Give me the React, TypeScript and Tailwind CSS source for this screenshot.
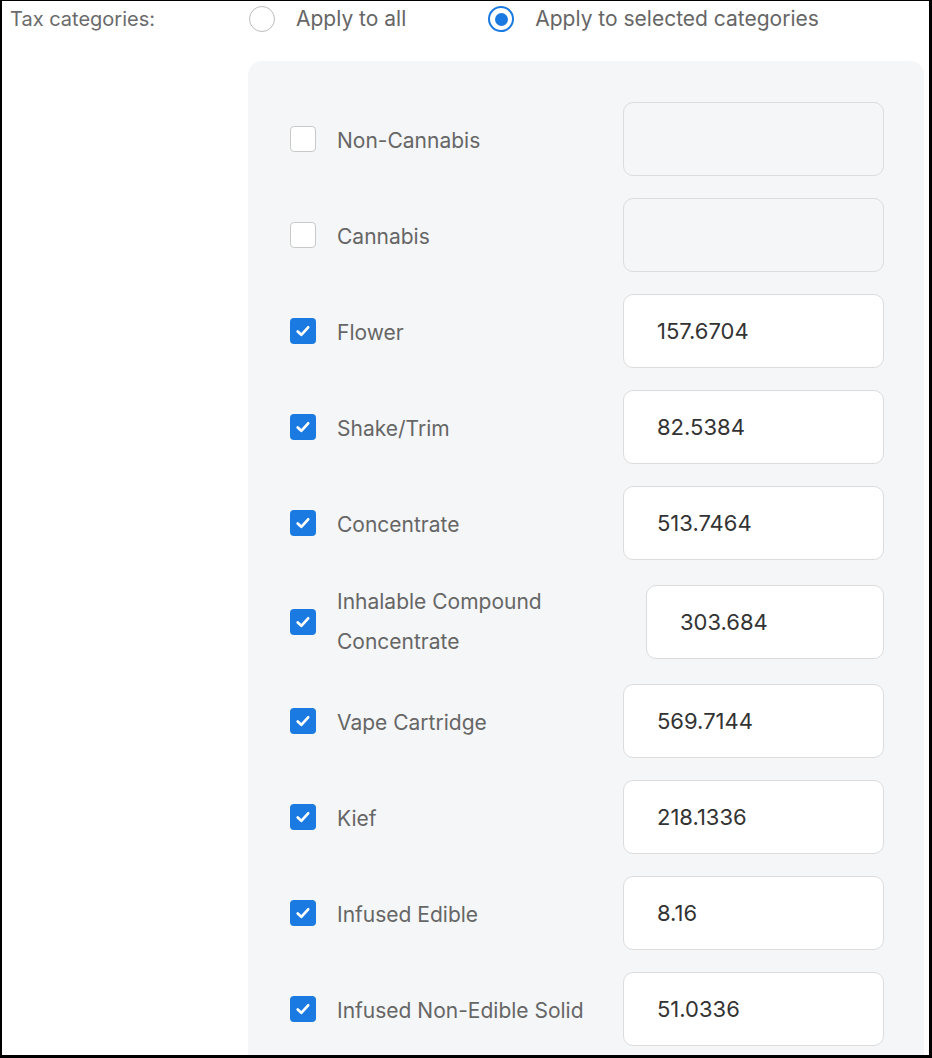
import React from "react";

type Row = { label: string[]; value: string; checked: boolean; width?: number };

const rows: Row[] = [
  { label: ["Non-Cannabis"], value: "", checked: false },
  { label: ["Cannabis"], value: "", checked: false },
  { label: ["Flower"], value: "157.6704", checked: true },
  { label: ["Shake/Trim"], value: "82.5384", checked: true },
  { label: ["Concentrate"], value: "513.7464", checked: true },
  { label: ["Inhalable Compound", "Concentrate"], value: "303.684", checked: true, width: 238 },
  { label: ["Vape Cartridge"], value: "569.7144", checked: true },
  { label: ["Kief"], value: "218.1336", checked: true },
  { label: ["Infused Edible"], value: "8.16", checked: true },
  { label: ["Infused Non-Edible Solid"], value: "51.0336", checked: true },
];

function Checkbox({ checked }: { checked: boolean }) {
  if (checked) {
    return (
      <div className="w-[26px] h-[26px] rounded-[4px] bg-[#1a7ae2] flex items-center justify-center shrink-0">
        <svg width="18" height="18" viewBox="0 0 16 16" fill="none">
          <path d="M3.3 8.4 L6.5 11.4 L12.6 4.7" stroke="white" strokeWidth="2.4" strokeLinecap="round" strokeLinejoin="round" />
        </svg>
      </div>
    );
  }
  return <div className="w-[26px] h-[26px] rounded-[4px] bg-white border-[1.5px] border-[#c9c9c9] shrink-0" />;
}

function Radio({ checked }: { checked: boolean }) {
  if (checked) {
    return (
      <div className="w-[26px] h-[26px] rounded-full border-2 border-[#1a7ae2] flex items-center justify-center shrink-0">
        <div className="w-[13px] h-[13px] rounded-full bg-[#1a7ae2]" />
      </div>
    );
  }
  return <div className="w-[26px] h-[26px] rounded-full border-[1.5px] border-[#bdbdbd] bg-white shrink-0" />;
}

export default function App() {
  return (
    <div className="w-[932px] h-[1058px] overflow-hidden bg-white border-black border-t border-l-2 border-r-[3px] border-b-[3px] font-['Inter',sans-serif]">
      <div className="flex">
        <div className="w-[246px] shrink-0 pl-[8px] pt-[5px] text-[20px] leading-[26px] text-[#6b6b6b] whitespace-nowrap">Tax categories:</div>
        <div className="flex-1 pr-[5px]">
          <div className="flex items-center h-[36px]">
            <div className="flex items-center gap-[21px] ml-[1px]">
              <Radio checked={false} />
              <span className="text-[21px] text-[#666]">Apply to all</span>
            </div>
            <div className="flex items-center gap-[21px] ml-[82px]">
              <Radio checked={true} />
              <span className="text-[21px] text-[#666]">Apply to selected categories</span>
            </div>
          </div>
          <div className="mt-[24px] bg-[#f5f6f8] rounded-t-[14px] pl-[42px] pr-[40px] pt-[41px] pb-[40px] flex flex-col gap-[22px]">
            {rows.map((r, i) => (
              <div key={i} className="flex items-center justify-between">
                <div className="flex items-center gap-[21px]">
                  <Checkbox checked={r.checked} />
                  <div className={"text-[21px] leading-[40px] text-[#666]" + (r.label.length === 1 ? " pt-[3px]" : "")}>
                    {r.label.map((l, j) => (
                      <div key={j}>{l}</div>
                    ))}
                  </div>
                </div>
                <div
                  className={
                    "h-[74px] rounded-[10px] border-[1.5px] border-[#dcdcdc] flex items-center pl-[33px] text-[22px] text-[#333] " +
                    (r.checked ? "bg-white" : "bg-[#f5f6f8]") +
                    (r.width ? " w-[238px]" : " w-[261px]")
                  }
                >
                  {r.value}
                </div>
              </div>
            ))}
          </div>
        </div>
      </div>
    </div>
  );
}
